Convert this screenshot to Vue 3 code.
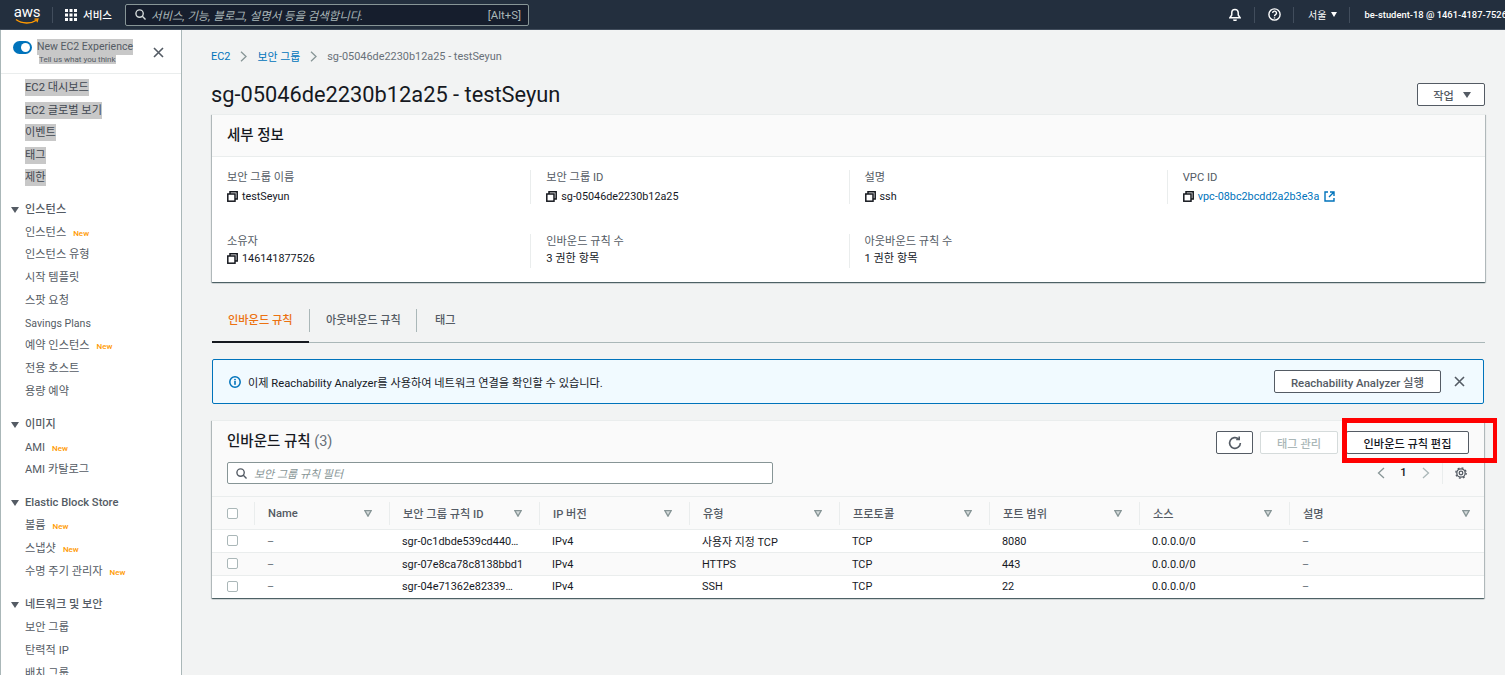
<script setup>
const navGroups = [
  { first: true, items: [
    { t: 'EC2 대시보드', sel: true }, { t: 'EC2 글로벌 보기', sel: true }, { t: '이벤트', sel: true }, { t: '태그', sel: true }, { t: '제한', sel: true }
  ] },
  { title: '인스턴스', items: [
    { t: '인스턴스', isNew: true }, { t: '인스턴스 유형' }, { t: '시작 템플릿' }, { t: '스팟 요청' }, { t: 'Savings Plans', latin: true }, { t: '예약 인스턴스', isNew: true }, { t: '전용 호스트' }, { t: '용량 예약' }
  ] },
  { title: '이미지', items: [ { t: 'AMI', isNew: true }, { t: 'AMI 카탈로그' } ] },
  { title: 'Elastic Block Store', items: [ { t: '볼륨', isNew: true }, { t: '스냅샷', isNew: true }, { t: '수명 주기 관리자', isNew: true } ] },
  { title: '네트워크 및 보안', items: [ { t: '보안 그룹' }, { t: '탄력적 IP' }, { t: '배치 그룹' } ] }
]
const columns = ['Name', '보안 그룹 규칙 ID', 'IP 버전', '유형', '프로토콜', '포트 범위', '소스', '설명']
const rows = [
  ['–', 'sgr-0c1dbde539cd440…', 'IPv4', '사용자 지정 TCP', 'TCP', '8080', '0.0.0.0/0', '–'],
  ['–', 'sgr-07e8ca78c8138bbd1', 'IPv4', 'HTTPS', 'TCP', '443', '0.0.0.0/0', '–'],
  ['–', 'sgr-04e71362e82339…', 'IPv4', 'SSH', 'TCP', '22', '0.0.0.0/0', '–']
]
</script>

<template>
  <div class="page">
    <header class="topbar">
      <div class="logo">
        <span class="logo-text">aws</span>
        <svg class="smile" width="24" height="7" viewBox="0 0 24 7"><path d="M1 1.5C7 6 16 6 22 2" fill="none" stroke="#f90" stroke-width="1.5"/><path d="M19.5 1.2L23 1l-1 3.2" fill="none" stroke="#f90" stroke-width="1.2"/></svg>
      </div>
      <span class="top-sep first"></span>
      <svg class="grid-icon" width="12" height="12" viewBox="0 0 12 12" fill="#fff"><rect x="0" y="0" width="3" height="3"/><rect x="4.5" y="0" width="3" height="3"/><rect x="9" y="0" width="3" height="3"/><rect x="0" y="4.5" width="3" height="3"/><rect x="4.5" y="4.5" width="3" height="3"/><rect x="9" y="4.5" width="3" height="3"/><rect x="0" y="9" width="3" height="3"/><rect x="4.5" y="9" width="3" height="3"/><rect x="9" y="9" width="3" height="3"/></svg>
      <span class="services">서비스</span>
      <div class="search">
        <svg width="11" height="11" viewBox="0 0 12 12" fill="none" stroke="#d5dbdb" stroke-width="1.5"><circle cx="5" cy="5" r="4"/><path d="M8 8l3.5 3.5"/></svg>
        <span class="search-ph">서비스, 기능, 블로그, 설명서 등을 검색합니다.</span>
        <span class="search-key">[Alt+S]</span>
      </div>
      <div class="top-right">
        <svg width="12" height="13" viewBox="0 0 13 14" fill="none" stroke="#fff" stroke-width="1.6"><path d="M1 10.5h11L10 7.5V5a3.5 3.5 0 0 0-7 0v2.5z"/><path d="M5 12.5a1.6 1.6 0 0 0 3 0"/></svg>
        <span class="top-sep bell-sep"></span>
        <svg width="13" height="13" viewBox="0 0 13 13" fill="none" stroke="#fff" stroke-width="1.4"><circle cx="6.5" cy="6.5" r="5.6"/><path d="M4.7 5a1.9 1.9 0 1 1 2.8 1.7c-.7.4-1 .8-1 1.5"/><path d="M6.5 9.3v1.2"/></svg>
        <span class="top-sep help-sep"></span>
        <span class="region">서울</span>
        <span class="caret"></span>
        <span class="top-sep region-sep"></span>
        <span class="account">be-student-18 @ 1461-4187-7526</span>
      </div>
    </header>

    <div class="body">
      <aside class="sidebar">
        <div class="exp">
          <span class="toggle"><span class="knob"></span></span>
          <div class="exp-text">
            <span class="sel exp-title">New EC2 Experience</span>
            <span class="sel exp-sub">Tell us what you think</span>
          </div>
          <svg class="exp-close" width="11" height="11" viewBox="0 0 11 11" stroke="#545b64" stroke-width="1.6"><path d="M1 1l9 9M10 1l-9 9"/></svg>
        </div>
        <nav class="nav">
          <section v-for="(g, i) in navGroups" :key="i" class="nav-group" :class="{ lead: g.first }">
            <div v-if="g.title" class="nav-title"><span class="nav-caret"></span>{{ g.title }}</div>
            <div v-for="it in g.items" :key="it.t" class="nav-item" :class="{ compact: g.first, latin: it.latin, long: g.items.length > 5 }">
              <span :class="{ sel: it.sel }">{{ it.t }}</span>
              <span v-if="it.isNew" class="new">New</span>
            </div>
          </section>
        </nav>
      </aside>

      <main class="main">
        <div class="crumbs">
          <span class="link">EC2</span>
          <svg width="7" height="11" viewBox="0 0 7 11" fill="none" stroke="#879596" stroke-width="1.3"><path d="M1 .8l5 4.7-5 4.7"/></svg>
          <span class="link">보안 그룹</span>
          <svg width="7" height="11" viewBox="0 0 7 11" fill="none" stroke="#879596" stroke-width="1.3"><path d="M1 .8l5 4.7-5 4.7"/></svg>
          <span class="crumb-cur">sg-05046de2230b12a25 - testSeyun</span>
        </div>
        <div class="title-row">
          <h1>sg-05046de2230b12a25 - testSeyun</h1>
          <button class="btn action-btn">작업<span class="dark-caret"></span></button>
        </div>

        <section class="card details">
          <h2 class="details-head">세부 정보</h2>
          <div class="details-grid">
            <div class="field">
              <div class="label">보안 그룹 이름</div>
              <div class="value"><svg class="copy" width="11" height="11" viewBox="0 0 11 11" fill="none" stroke="#16191f" stroke-width="1.5"><rect x=".8" y="3" width="7.2" height="7.2"/><path d="M3 3V.8h7.2V8H8"/></svg>testSeyun</div>
            </div>
            <div class="field">
              <div class="label">보안 그룹 ID</div>
              <div class="value"><svg class="copy" width="11" height="11" viewBox="0 0 11 11" fill="none" stroke="#16191f" stroke-width="1.5"><rect x=".8" y="3" width="7.2" height="7.2"/><path d="M3 3V.8h7.2V8H8"/></svg>sg-05046de2230b12a25</div>
            </div>
            <div class="field">
              <div class="label">설명</div>
              <div class="value"><svg class="copy" width="11" height="11" viewBox="0 0 11 11" fill="none" stroke="#16191f" stroke-width="1.5"><rect x=".8" y="3" width="7.2" height="7.2"/><path d="M3 3V.8h7.2V8H8"/></svg>ssh</div>
            </div>
            <div class="field">
              <div class="label">VPC ID</div>
              <div class="value"><svg class="copy" width="11" height="11" viewBox="0 0 11 11" fill="none" stroke="#16191f" stroke-width="1.5"><rect x=".8" y="3" width="7.2" height="7.2"/><path d="M3 3V.8h7.2V8H8"/></svg><span class="link">vpc-08bc2bcdd2a2b3e3a</span><svg class="ext" width="11" height="11" viewBox="0 0 11 11" fill="none" stroke="#0073bb" stroke-width="1.4"><path d="M4 1H1v9h9V7"/><path d="M6 1h4v4M10 1L5 6"/></svg></div>
            </div>
            <div class="field">
              <div class="label">소유자</div>
              <div class="value tight owner"><svg class="copy" width="11" height="11" viewBox="0 0 11 11" fill="none" stroke="#16191f" stroke-width="1.5"><rect x=".8" y="3" width="7.2" height="7.2"/><path d="M3 3V.8h7.2V8H8"/></svg>146141877526</div>
            </div>
            <div class="field">
              <div class="label">인바운드 규칙 수</div>
              <div class="value tight">3 권한 항목</div>
            </div>
            <div class="field">
              <div class="label">아웃바운드 규칙 수</div>
              <div class="value tight">1 권한 항목</div>
            </div>
            <div class="field empty"></div>
          </div>
        </section>

        <div class="tabs">
          <div class="tab active">인바운드 규칙</div>
          <div class="tab second">아웃바운드 규칙</div>
          <div class="tab third">태그</div>
        </div>

        <div class="flash">
          <svg width="12" height="12" viewBox="0 0 12 12"><circle cx="6" cy="6" r="5.2" fill="none" stroke="#0073bb" stroke-width="1.5"/><rect x="5.2" y="5" width="1.6" height="3.8" fill="#0073bb"/><rect x="5.2" y="2.9" width="1.6" height="1.4" fill="#0073bb"/></svg>
          <span class="flash-text">이제 Reachability Analyzer를 사용하여 네트워크 연결을 확인할 수 있습니다.</span>
          <button class="btn flash-btn">Reachability Analyzer 실행</button>
          <svg class="flash-close" width="11" height="11" viewBox="0 0 11 11" stroke="#545b64" stroke-width="1.6"><path d="M1 1l9 9M10 1l-9 9"/></svg>
        </div>

        <section class="card rules">
          <div class="rules-head">
            <div class="rules-left">
              <h2 class="rules-title">인바운드 규칙 <span class="count">(3)</span></h2>
              <div class="filter">
                <svg width="11" height="11" viewBox="0 0 12 12" fill="none" stroke="#545b64" stroke-width="1.5"><circle cx="5" cy="5" r="4"/><path d="M8 8l3.5 3.5"/></svg>
                <span>보안 그룹 규칙 필터</span>
              </div>
            </div>
            <div class="rules-right">
              <div class="actions">
                <button class="btn refresh"><svg width="14" height="14" viewBox="0 0 13 13" fill="none" stroke="#545b64" stroke-width="1.5"><path d="M11.5 6.5a5 5 0 1 1-1.6-3.7"/><path d="M10.4.5v2.8H7.6" /></svg></button>
                <button class="btn disabled">태그 관리</button>
                <button class="btn edit">인바운드 규칙 편집</button>
              </div>
              <div class="pager">
                <svg width="8" height="12" viewBox="0 0 8 12" fill="none" stroke="#879596" stroke-width="1.3"><path d="M7 1L1.5 6 7 11"/></svg>
                <span class="page-no">1</span>
                <svg width="8" height="12" viewBox="0 0 8 12" fill="none" stroke="#aab7b8" stroke-width="1.3"><path d="M1 1l5.5 5L1 11"/></svg>
                <span class="pager-sep"></span>
                <svg width="12" height="12" viewBox="0 0 12 12" fill="none" stroke="#545b64"><circle cx="6" cy="6" r="1.8" stroke-width="1.3"/><circle cx="6" cy="6" r="4.2" stroke-width="1.3"/><circle cx="6" cy="6" r="5.2" stroke-width="1.3" stroke-dasharray="1.9 2.18"/></svg>
              </div>
            </div>
          </div>
          <div class="table">
            <div class="tr th">
              <div class="check-cell"><span class="check"></span></div>
              <div v-for="c in columns" :key="c" class="cell head-cell">
                <span class="head-text">{{ c }}</span>
                <svg class="sort" width="8" height="7" viewBox="0 0 8 7"><path d="M.8.7h6.4L4 6.2z" fill="#d5dbdb" stroke="#879596" stroke-width="1.3"/></svg>
              </div>
            </div>
            <div v-for="(r, i) in rows" :key="i" class="tr td" :class="{ alt: i === 1 }">
              <div class="check-cell"><span class="check"></span></div>
              <div v-for="(v, j) in r" :key="j" class="cell" :class="{ dash: v === '–' }">{{ v }}</div>
            </div>
          </div>
        </section>
      </main>
    </div>

    <div class="annotation"></div>
  </div>
</template>

<style>
html, body { margin: 0; overflow: hidden; }
</style>

<style scoped>
* { box-sizing: border-box; }
.page {
  position: relative; width: 1505px; height: 675px; overflow: hidden; background: #f2f3f3;
  font-family: Roboto, "Noto Sans CJK KR", sans-serif; font-size: 11.2px; color: #16191f;
  display: flex; flex-direction: column;
}
.sel { background: #c8c8c8; padding: 2px 0; }
.link { color: #0073bb; }

.topbar { height: 30px; flex: none; background: #232f3e; border-bottom: 1px solid #414d5c; display: flex; align-items: center; color: #fff; }
.logo { width: 24px; margin-left: 15px; display: flex; flex-direction: column; align-items: center; position: relative; height: 22px; }
.logo-text { font-size: 15px; line-height: 14px; margin-top: 1px; letter-spacing: -.2px; }
.smile { margin-top: -1px; }
.top-sep { width: 1px; height: 16px; background: #414d5c; flex: none; }
.top-sep.first { margin-left: 13px; }
.grid-icon { margin-left: 12px; }
.services { margin-left: 6px; font-size: 10.5px; font-weight: 500; }
.search { margin-left: 13px; width: 404px; height: 22px; background: #161e2d; border: 1px solid #879596; border-radius: 2px; display: flex; align-items: center; padding: 0 7px 0 9px; }
.search-ph { margin-left: 5px; font-style: italic; color: #aab7b8; font-size: 11.4px; flex: 1; }
.search-key { color: #aab7b8; font-size: 11.4px; }
.top-right { margin-left: auto; display: flex; align-items: center; }
.bell-sep { margin: 0 13px; }
.help-sep { margin: 0 14px 0 12px; }
.region { font-size: 10px; }
.caret { margin-left: 5px; width: 0; height: 0; border: 3.5px solid transparent; border-top: 5px solid #fff; border-bottom: 0; }
.region-sep { margin: 0 14px 0 12px; }
.account { font-size: 9.4px; font-weight: 500; white-space: nowrap; margin-right: -2px; flex: none; }

.body { flex: 1; display: flex; min-height: 0; }
.sidebar { width: 182px; flex: none; background: #fff; border-left: 1px solid #aab7b8; border-right: 1px solid #aab7b8; overflow: hidden; }
.exp { height: 44px; border-bottom: 1px solid #eaeded; display: flex; align-items: flex-start; position: relative; padding: 9px 0 0 12px; }
.toggle { width: 19px; height: 13px; border-radius: 7px; background: #0073bb; margin-top: 2px; position: relative; flex: none; }
.knob { position: absolute; right: 2px; top: 2px; width: 9px; height: 9px; border-radius: 50%; background: #fff; }
.exp-text { margin-left: 5px; display: flex; flex-direction: column; align-items: flex-start; }
.exp-title { color: #545b64; font-size: 10.5px; line-height: 16px; padding: 0; }
.exp-sub { color: #545b64; font-size: 8px; line-height: 9px; margin: 0 0 0 2px; padding: 0; }
.exp-close { position: absolute; left: 152px; top: 17px; }
.nav { padding-top: 3px; }
.nav-group { padding-bottom: 8px; }
.nav-group.lead { padding-bottom: 7px; }
.nav-title { position: relative; height: 25px; line-height: 25px; padding-left: 24px; color: #545b64; font-weight: 500; }
.nav-caret { position: absolute; left: 10px; top: 10px; border: 4px solid transparent; border-top: 6px solid #545b64; border-bottom: 0; }
.nav-item { height: 22.9px; line-height: 22.9px; padding-left: 24px; color: #545b64; white-space: nowrap; }
.nav-item.long { height: 22.75px; line-height: 22.75px; }
.nav-item.compact { height: 22.5px; line-height: 22.5px; }
.nav-item.latin { font-size: 10.6px; }
.nav-item .sel { color: #414750; }
.new { margin-left: 7px; color: #ff9900; font-size: 8px; font-weight: 500; }

.main { flex: 1; min-width: 0; padding: 17px 20px 0 30px; display: flex; flex-direction: column; }
.crumbs { height: 18px; display: flex; align-items: center; gap: 10px; margin-left: -1px; font-size: 10.9px; }
.crumb-cur { color: #687078; }
.title-row { margin-top: 15px; height: 34px; display: flex; justify-content: space-between; align-items: flex-start; }
h1 { margin: 0 0 0 -1px; font-size: 21.8px; line-height: 30px; font-weight: 400; }
.btn { font-family: inherit; font-size: 11.2px; background: #fff; border: 1px solid #545b64; border-radius: 2px; color: #545b64; font-weight: 500; height: 23px; padding: 0; display: flex; align-items: center; justify-content: center; flex: none; }
.action-btn { width: 68px; margin-top: 3px; gap: 9px; padding-left: 2px; }
.dark-caret { width: 0; height: 0; border: 4px solid transparent; border-top: 6px solid #545b64; border-bottom: 0; }

.card { background: #fff; box-shadow: 0 1px 1px 0 rgba(0,28,36,.5), 1px 1px 1px 0 rgba(0,28,36,.2), -1px 1px 1px 0 rgba(0,28,36,.2); border-top: 1px solid #eaeded; }
.details-head { margin: 0; height: 42px; background: #fafafa; border-bottom: 1px solid #eaeded; padding-left: 15px; line-height: 42px; font-size: 14.5px; font-weight: 500; }
.details-grid { display: grid; grid-template-columns: repeat(4, 1fr); row-gap: 30px; padding: 13px 0 14px; }
.field { height: 34px; padding-left: 15px; border-left: 1px solid #eaeded; }
.field:nth-child(4n+1) { border-left: 0; }
.field.empty { border-left: 0; }
.label { color: #545b64; line-height: 14px; padding-top: 1px; height: 15px; }
.value { margin-top: 4px; line-height: 15px; display: flex; align-items: center; font-size: 10.8px; }
.value.tight { margin-top: 2px; font-size: 11.2px; }
.value.owner { font-size: 10.8px; }
.copy { margin-right: 4px; flex: none; }
.ext { margin-left: 5px; }

.tabs { margin-top: 18px; height: 43px; border-bottom: 1px solid #aab7b8; display: flex; flex: none; }
.tab { position: relative; height: 42px; line-height: 42px; color: #545b64; font-weight: 500; }
.tab.active { width: 97px; padding-left: 16px; color: #ec7211; border-bottom: 2px solid #16191f; height: 43px; }
.tab.second { width: 108px; padding-left: 17px; }
.tab.third { padding-left: 18px; }
.tab.second::before, .tab.second::after { content: ""; position: absolute; top: 9px; width: 1px; height: 23px; background: #aab7b8; }
.tab.second::before { left: 0; }
.tab.second::after { right: 0; }

.flash { margin-top: 16px; height: 45px; flex: none; background: #f1faff; border: 1px solid #0073bb; border-radius: 2px; display: flex; align-items: center; padding-left: 16px; position: relative; margin-right: 1px; }
.flash-text { margin-left: 7px; flex: 1; }
.flash-btn { width: 167px; margin-right: 13px; font-size: 11.4px; }
.flash-close { margin-right: 18px; }

.rules { margin-top: 16px; margin-right: 1px; }
.rules-head { height: 76px; background: #fafafa; border-bottom: 1px solid #eaeded; display: flex; justify-content: space-between; padding: 0 15px; }
.rules-title { margin: 0; padding-top: 12px; font-size: 14.5px; line-height: 18px; font-weight: 500; }
.count { color: #687078; font-weight: 400; }
.filter { margin-top: 11px; width: 546px; height: 22px; background: #fff; border: 1px solid #879596; border-radius: 2px; display: flex; align-items: center; gap: 7px; padding-left: 8px; color: #879596; font-style: italic; font-size: 11px; }
.rules-right { width: 253px; }
.actions { margin-top: 10px; display: flex; gap: 7px; justify-content: flex-end; }
.refresh { width: 37px; }
.disabled { width: 78px; border-color: #d5dbdb; color: #aab7b8; }
.edit { width: 123px; color: #16191f; margin-left: 1px; }
.pager { margin-top: 7px; height: 23px; display: flex; align-items: center; justify-content: flex-end; padding-right: 2px; }
.page-no { width: 37px; text-align: center; font-weight: 500; }
.pager-sep { width: 1px; height: 23px; background: #eaeded; margin: 0 12px 0 12px; }

.tr { display: grid; grid-template-columns: 42px 135px repeat(6, 150px) 1fr; align-items: center; }
.th { height: 33px; background: #fafafa; border-bottom: 1px solid #eaeded; }
.td { height: 23px; background: #fff; border-bottom: 1px solid #eaeded; }
.td.alt { background: #fafafa; }
.td:last-child { border-bottom: 0; height: 22px; }
.td:last-child .cell { margin-top: -2px; }
.check-cell { padding-left: 15px; display: flex; align-items: center; }
.td .check-cell { margin-top: -2px; }
.check { width: 11px; height: 11px; border: 1px solid #aab7b8; border-radius: 2px; background: #fff; }
.cell { padding-left: 13px; white-space: nowrap; overflow: hidden; color: #16191f; font-size: 10.9px; }
.cell.dash { color: #687078; }
.head-cell { height: 23px; border-left: 1px solid #eaeded; display: flex; align-items: center; justify-content: space-between; padding: 0 17px 0 13px; font-size: 11.2px; }
.head-cell:last-child { padding-right: 14px; }
.head-cell .head-text { color: #545b64; font-weight: 500; }

.annotation { position: absolute; left: 1342px; top: 418px; width: 155px; height: 45px; border: 5px solid #ff0000; border-right-width: 4px; pointer-events: none; }
</style>
